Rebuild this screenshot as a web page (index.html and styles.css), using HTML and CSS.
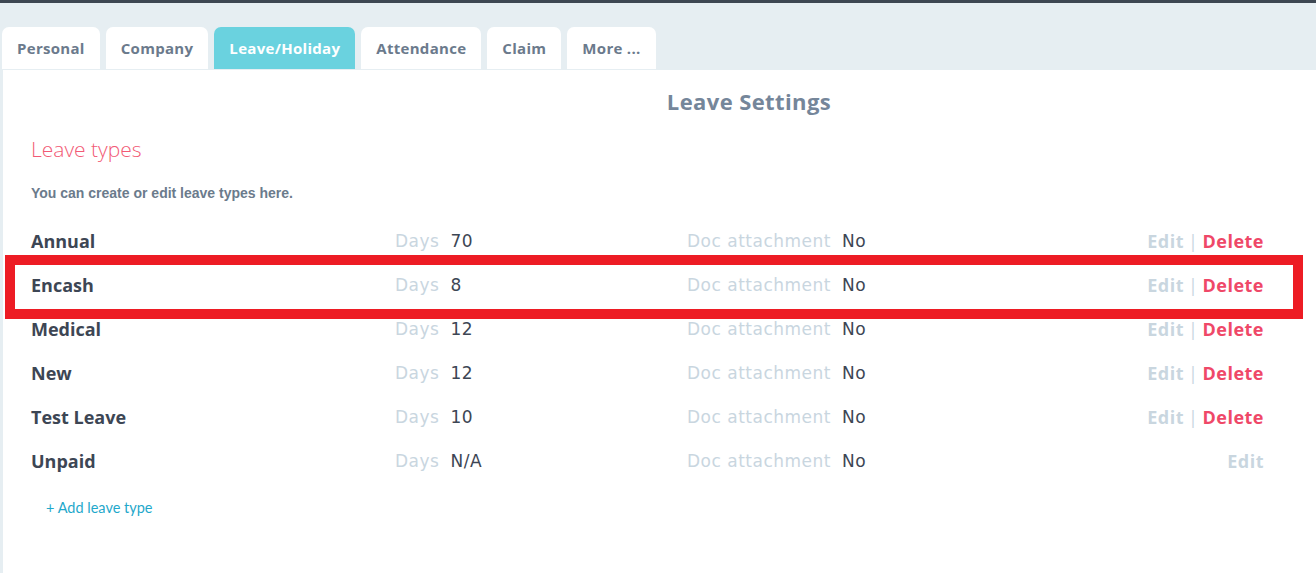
FILE: index.html
```html
<!DOCTYPE html>
<html lang="en">
<head>
  <meta charset="UTF-8" />
  <meta name="viewport" content="width=device-width, initial-scale=1.0" />
  <title>Leave Settings</title>
  <link rel="stylesheet" href="styles.css">
</head>
<body>
  <div class="topbar"></div>

  <nav class="tabs">
    <a class="tab" href="#">Personal</a>
    <a class="tab" href="#">Company</a>
    <a class="tab active" href="#">Leave/Holiday</a>
    <a class="tab" href="#">Attendance</a>
    <a class="tab" href="#">Claim</a>
    <a class="tab" href="#">More ...</a>
  </nav>

  <main class="panel">
    <h1 class="page-title">Leave Settings</h1>

    <section class="leave-types">
      <h2>Leave types</h2>
      <p class="hint">You can create or edit leave types here.</p>

      <ul class="type-list">
        <li class="type-row">
          <span class="type-name">Annual</span>
          <span class="field"><span class="label">Days</span><span class="value">70</span></span>
          <span class="field"><span class="label">Doc attachment</span><span class="value">No</span></span>
          <span class="actions"><a class="edit" href="#">Edit</a><span class="sep">|</span><a class="delete" href="#">Delete</a></span>
        </li>
        <li class="type-row">
          <span class="type-name">Encash</span>
          <span class="field"><span class="label">Days</span><span class="value">8</span></span>
          <span class="field"><span class="label">Doc attachment</span><span class="value">No</span></span>
          <span class="actions"><a class="edit" href="#">Edit</a><span class="sep">|</span><a class="delete" href="#">Delete</a></span>
        </li>
        <li class="type-row">
          <span class="type-name">Medical</span>
          <span class="field"><span class="label">Days</span><span class="value">12</span></span>
          <span class="field"><span class="label">Doc attachment</span><span class="value">No</span></span>
          <span class="actions"><a class="edit" href="#">Edit</a><span class="sep">|</span><a class="delete" href="#">Delete</a></span>
        </li>
        <li class="type-row">
          <span class="type-name">New</span>
          <span class="field"><span class="label">Days</span><span class="value">12</span></span>
          <span class="field"><span class="label">Doc attachment</span><span class="value">No</span></span>
          <span class="actions"><a class="edit" href="#">Edit</a><span class="sep">|</span><a class="delete" href="#">Delete</a></span>
        </li>
        <li class="type-row">
          <span class="type-name">Test Leave</span>
          <span class="field"><span class="label">Days</span><span class="value">10</span></span>
          <span class="field"><span class="label">Doc attachment</span><span class="value">No</span></span>
          <span class="actions"><a class="edit" href="#">Edit</a><span class="sep">|</span><a class="delete" href="#">Delete</a></span>
        </li>
        <li class="type-row">
          <span class="type-name">Unpaid</span>
          <span class="field"><span class="label">Days</span><span class="value">N/A</span></span>
          <span class="field"><span class="label">Doc attachment</span><span class="value">No</span></span>
          <span class="actions"><a class="edit" href="#">Edit</a></span>
        </li>
      </ul>

      <a class="add-link" href="#">+ Add leave type</a>
    </section>
  </main>

  <!-- annotation box around the Encash row -->
  <div class="highlight"></div>
</body>
</html>
```

FILE: styles.css
```css
:root {
  --page-bg: #e6eef2;
  --bar: #3d4752;
  --tab-text: #6b7a8c;
  --accent: #6ad2df;
  --title: #75869a;
  --pink: #f25a75;
  --dark: #3d4654;
  --muted: #c9d6df;
  --danger: #ef4868;
  --link: #1fa8cb;
}

* {
  box-sizing: border-box;
  margin: 0;
  padding: 0;
}

body {
  background-color: var(--page-bg);
  font-family: "Open Sans", Arial, sans-serif;
  color: var(--dark);
  height: 573px;
  overflow: hidden;
}

a {
  text-decoration: none;
}

.topbar {
  height: 3px;
  background-color: var(--bar);
}

.tabs {
  display: flex;
  gap: 6px;
  padding: 24px 0 0 2px;
}

.tab {
  height: 42px;
  padding: 0 15px;
  display: flex;
  align-items: center;
  background-color: #fff;
  border-radius: 7px 7px 0 0;
  color: var(--tab-text);
  font-size: 15px;
  font-weight: 700;
  letter-spacing: 0.3px;
}

.tab.active {
  background-color: var(--accent);
  color: #fff;
}

.panel {
  margin: 1px 0 0 3px;
  background-color: #fff;
  height: 503px;
  padding: 16px 52px 0 28px;
}

.page-title {
  text-align: center;
  padding-left: 203px;
  font-size: 22px;
  line-height: 30px;
  font-weight: 700;
  letter-spacing: 0.4px;
  color: var(--title);
}

.leave-types h2 {
  margin-top: 19px;
  font-size: 21px;
  line-height: 28px;
  font-weight: 300;
  color: var(--pink);
}

.hint {
  margin-top: 20px;
  font-family: "Liberation Sans", Arial, sans-serif;
  font-size: 14px;
  line-height: 20px;
  font-weight: 700;
  color: #6b7b8c;
}

.type-list {
  list-style: none;
  margin-top: 16px;
}

.type-row {
  height: 44px;
  display: grid;
  grid-template-columns: 364px 292px 1fr auto;
  align-items: center;
}

.type-name {
  font-size: 18px;
  font-weight: 700;
  color: var(--dark);
}

.field {
  display: flex;
  gap: 11px;
  font-family: "DejaVu Sans", sans-serif;
  font-size: 17px;
  letter-spacing: 0.5px;
}

.field .label {
  color: var(--muted);
}

.field .value {
  color: var(--dark);
}

.actions {
  display: flex;
  align-items: center;
  gap: 4px;
  font-size: 18px;
  font-weight: 700;
  letter-spacing: 0.5px;
}

.actions .edit,
.actions .sep {
  color: var(--muted);
}

.actions .sep {
  font-weight: 400;
}

.actions .delete {
  color: var(--danger);
}

.add-link {
  display: inline-block;
  margin: 15px 0 0 15px;
  font-family: Lato, sans-serif;
  font-size: 14.5px;
  line-height: 20px;
  color: var(--link);
}

.highlight {
  position: absolute;
  left: 5px;
  top: 255px;
  width: 1298px;
  height: 64px;
  border: 10px solid #ed1c24;
  pointer-events: none;
}
```
